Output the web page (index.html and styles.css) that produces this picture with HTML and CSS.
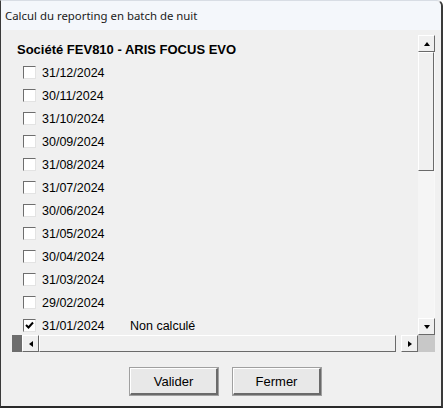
FILE: index.html
```html
<!DOCTYPE html>
<html>
<head>
    <title>Calcul du reporting en batch de nuit</title>
    <link rel="stylesheet" href="styles.css">
</head>
<body>
    <div class="window">
        <div class="titlebar">Calcul du reporting en batch de nuit</div>
        <div class="content">
            <div class="list-frame">
                <div class="list">
                    <div class="company">Société FEV810 - ARIS FOCUS EVO</div>
                    <div class="row"><span class="check"></span><span class="date">31/12/2024</span></div>
                    <div class="row"><span class="check"></span><span class="date">30/11/2024</span></div>
                    <div class="row"><span class="check"></span><span class="date">31/10/2024</span></div>
                    <div class="row"><span class="check"></span><span class="date">30/09/2024</span></div>
                    <div class="row"><span class="check"></span><span class="date">31/08/2024</span></div>
                    <div class="row"><span class="check"></span><span class="date">31/07/2024</span></div>
                    <div class="row"><span class="check"></span><span class="date">30/06/2024</span></div>
                    <div class="row"><span class="check"></span><span class="date">31/05/2024</span></div>
                    <div class="row"><span class="check"></span><span class="date">30/04/2024</span></div>
                    <div class="row"><span class="check"></span><span class="date">31/03/2024</span></div>
                    <div class="row"><span class="check"></span><span class="date">29/02/2024</span></div>
                    <div class="row">
                        <span class="check checked">
                            <svg width="9" height="9" viewBox="0 0 9 9"><path d="M1 4 L3.5 6.5 L8 1.5" fill="none" stroke="#000" stroke-width="2"/></svg>
                        </span>
                        <span class="date">31/01/2024</span>
                        <span class="status">Non calculé</span>
                    </div>
                </div>
                <div class="vscroll">
                    <div class="sb-btn"><span class="arrow up"></span></div>
                    <div class="vthumb"></div>
                    <div class="vtrack"></div>
                    <div class="sb-btn"><span class="arrow down"></span></div>
                </div>
                <div class="hscroll">
                    <div class="hstub"></div>
                    <div class="sb-btn"><span class="arrow left"></span></div>
                    <div class="hthumb"></div>
                    <div class="sb-btn"><span class="arrow right"></span></div>
                </div>
                <div class="corner"></div>
            </div>
            <div class="buttons">
                <button class="btn">Valider</button>
                <button class="btn">Fermer</button>
            </div>
        </div>
    </div>
</body>
</html>
```

FILE: styles.css
```css
html, body {
    margin: 0;
    padding: 0;
    background: #ffffff;
}
.window {
    width: 443px;
    height: 408px;
    box-sizing: border-box;
    border-left: 1px solid #3a3a3a;
    border-right: 2px solid #3a3a3a;
    border-bottom: 2px solid #2a2a2a;
    border-top: 1px solid #d8dde4;
    border-radius: 0 6px 0 0;
    background: #f0f0f0;
    display: flex;
    flex-direction: column;
    font-family: "Liberation Sans", Arial, sans-serif;
    color: #000;
}
.titlebar {
    height: 29px;
    background: #f4f7fb;
    border-radius: 0 6px 0 0;
    font-family: "Noto Sans", "Open Sans", sans-serif;
    font-size: 11.4px;
    line-height: 29px;
    padding-left: 4px;
    color: #1a1a1a;
}
.content {
    flex: 1;
    padding: 5px 12px 0 11px;
    display: flex;
    flex-direction: column;
}
.list-frame {
    height: 317px;
    display: grid;
    grid-template-columns: 1fr 17px;
    grid-template-rows: 1fr 17px;
}
.list {
    overflow: hidden;
    padding: 4px 0 0 5px;
}
.company {
    font-weight: bold;
    font-size: 13px;
    height: 22px;
    line-height: 22px;
}
.row {
    height: 23px;
    display: flex;
    align-items: center;
    font-size: 12.5px;
}
.check {
    width: 13px;
    height: 13px;
    box-sizing: border-box;
    background: #fff;
    border-top: 1px solid #6e6e6e;
    border-left: 1px solid #6e6e6e;
    border-right: 1px solid #e3e3e3;
    border-bottom: 1px solid #e3e3e3;
    margin: 0 6px 0 6px;
    display: flex;
    align-items: center;
    justify-content: center;
}
.date {
    width: 88px;
}
.vscroll {
    display: flex;
    flex-direction: column;
    border-right: 1px solid #f8f8f8;
}
.sb-btn {
    width: 17px;
    height: 17px;
    box-sizing: border-box;
    background: #f0f0f0;
    border-top: 1px solid #fff;
    border-left: 1px solid #fff;
    border-right: 1px solid #6a6a6a;
    border-bottom: 1px solid #6a6a6a;
    display: flex;
    align-items: center;
    justify-content: center;
}
.vthumb {
    height: 119px;
    box-sizing: border-box;
    background: #f0f0f0;
    border-top: 1px solid #fff;
    border-left: 1px solid #fff;
    border-right: 1px solid #6a6a6a;
    border-bottom: 1px solid #6a6a6a;
}
.vtrack {
    flex: 1;
    background: #f5f5f5;
}
.hscroll {
    display: flex;
}
.hstub {
    width: 10px;
    background: #6d6d6d;
}
.hthumb {
    width: 357px;
    box-sizing: border-box;
    background: #f0f0f0;
    border-top: 1px solid #fff;
    border-left: 1px solid #fff;
    border-right: 1px solid #6a6a6a;
    border-bottom: 1px solid #6a6a6a;
    margin-right: 5px;
}
.corner {
    background: #c8c8c8;
}
.arrow {
    width: 0;
    height: 0;
    border: 3px solid transparent;
}
.arrow.up {
    border-bottom: 4px solid #000;
    border-top: 0;
}
.arrow.down {
    border-top: 4px solid #000;
    border-bottom: 0;
}
.arrow.left {
    border-right: 4px solid #000;
    border-left: 0;
}
.arrow.right {
    border-left: 4px solid #000;
    border-right: 0;
}
.buttons {
    display: flex;
    justify-content: center;
    gap: 15px;
    margin-top: 16px;
    padding-left: 10px;
}
.btn {
    width: 88px;
    height: 27px;
    box-sizing: border-box;
    background: #e8e8e8;
    border-top: 1px solid #fff;
    border-left: 1px solid #fff;
    border-right: 2px solid #6a6a6a;
    border-bottom: 2px solid #6a6a6a;
    outline: 1px solid #a0a0a0;
    font-family: "Liberation Sans", Arial, sans-serif;
    font-size: 13px;
    color: #000;
    padding: 0;
}
```
